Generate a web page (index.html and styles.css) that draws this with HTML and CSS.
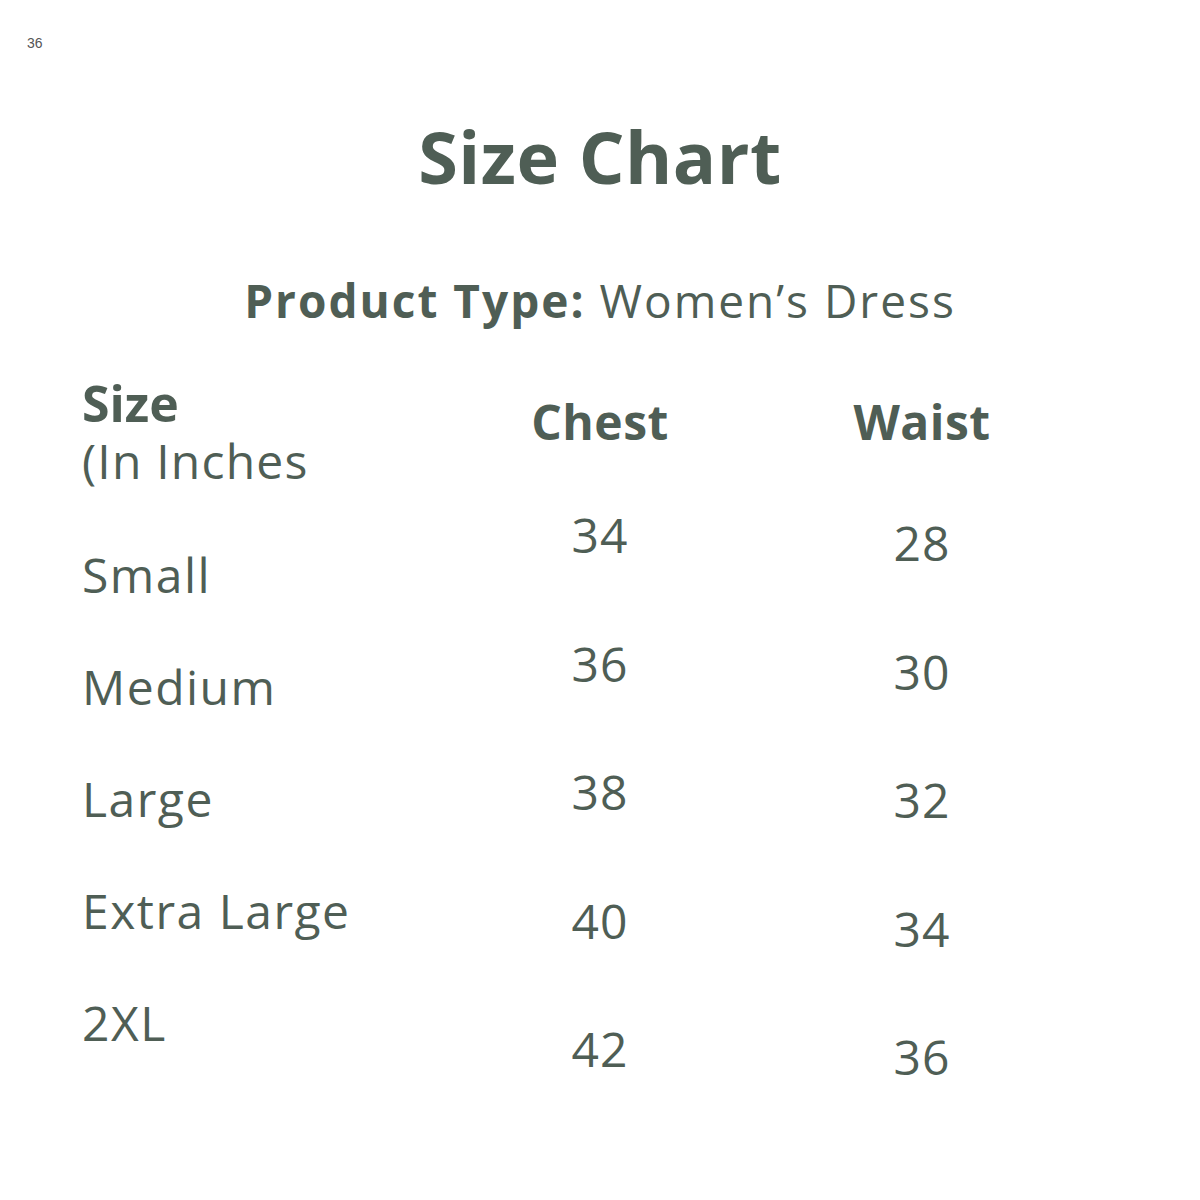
FILE: index.html
```html
<!DOCTYPE html>
<html>
<head>
<meta charset="utf-8">
<link rel="stylesheet" href="styles.css">
</head>
<body>
<div class="page">
  <div class="corner">36</div>
  <h1 class="title">Size Chart</h1>
  <p class="subtitle"><b>Product Type:</b> Women’s Dress</p>
  <div class="chart">
    <div class="col col-size">
      <div class="head">Size</div>
      <div class="unit">(In Inches</div>
      <div class="label first">Small</div>
      <div class="label">Medium</div>
      <div class="label">Large</div>
      <div class="label">Extra Large</div>
      <div class="label">2XL</div>
    </div>
    <div class="col col-chest">
      <div class="head head-m">Chest</div>
      <div class="val first">34</div>
      <div class="val">36</div>
      <div class="val">38</div>
      <div class="val">40</div>
      <div class="val">42</div>
    </div>
    <div class="col col-waist">
      <div class="head head-m">Waist</div>
      <div class="val first">28</div>
      <div class="val">30</div>
      <div class="val">32</div>
      <div class="val">34</div>
      <div class="val">36</div>
    </div>
  </div>
</div>
</body>
</html>
```
FILE: styles.css
```css
html, body {
  margin: 0;
  padding: 0;
  background: #ffffff;
}
.page {
  width: 1200px;
  height: 1200px;
  box-sizing: border-box;
  padding-top: 35px;
  font-family: "Open Sans", "DejaVu Sans", sans-serif;
  color: #4f5e55;
  overflow: hidden;
}
.corner {
  font-family: "Liberation Sans", Arial, sans-serif;
  font-size: 14px;
  line-height: 16px;
  color: #555555;
  padding-left: 27px;
}
.title {
  margin: 65px 0 0 0;
  font-size: 72px;
  line-height: 80px;
  font-weight: 700;
  text-align: center;
  letter-spacing: 0.5px;
}
.subtitle {
  margin: 76px 0 0 0;
  font-size: 46px;
  line-height: 56px;
  font-weight: 400;
  text-align: center;
  letter-spacing: 2px;
}
.subtitle b {
  font-weight: 700;
}
.chart {
  margin-top: 31px;
  padding-left: 82px;
  display: grid;
  grid-template-columns: 438px 160px 484px;
}
.col {
  display: flex;
  flex-direction: column;
}
.col-chest, .col-waist {
  align-items: center;
}
.head {
  font-size: 50px;
  line-height: 52px;
  font-weight: 700;
  margin-top: 18px;
}
.head-m {
  font-size: 48px;
  line-height: 56px;
  margin-top: 35px;
  letter-spacing: 0.5px;
}
.unit {
  font-size: 48px;
  line-height: 56px;
  margin-top: 4px;
  letter-spacing: 1.2px;
}
.label {
  font-size: 48px;
  line-height: 112px;
  letter-spacing: 1.5px;
  white-space: nowrap;
}
.label.first {
  margin-top: 30px;
}
.val {
  font-size: 48px;
  line-height: 128.5px;
  letter-spacing: 1px;
}
.col-chest .val.first {
  margin-top: 21px;
}
.col-waist .val.first {
  margin-top: 29px;
}
```
